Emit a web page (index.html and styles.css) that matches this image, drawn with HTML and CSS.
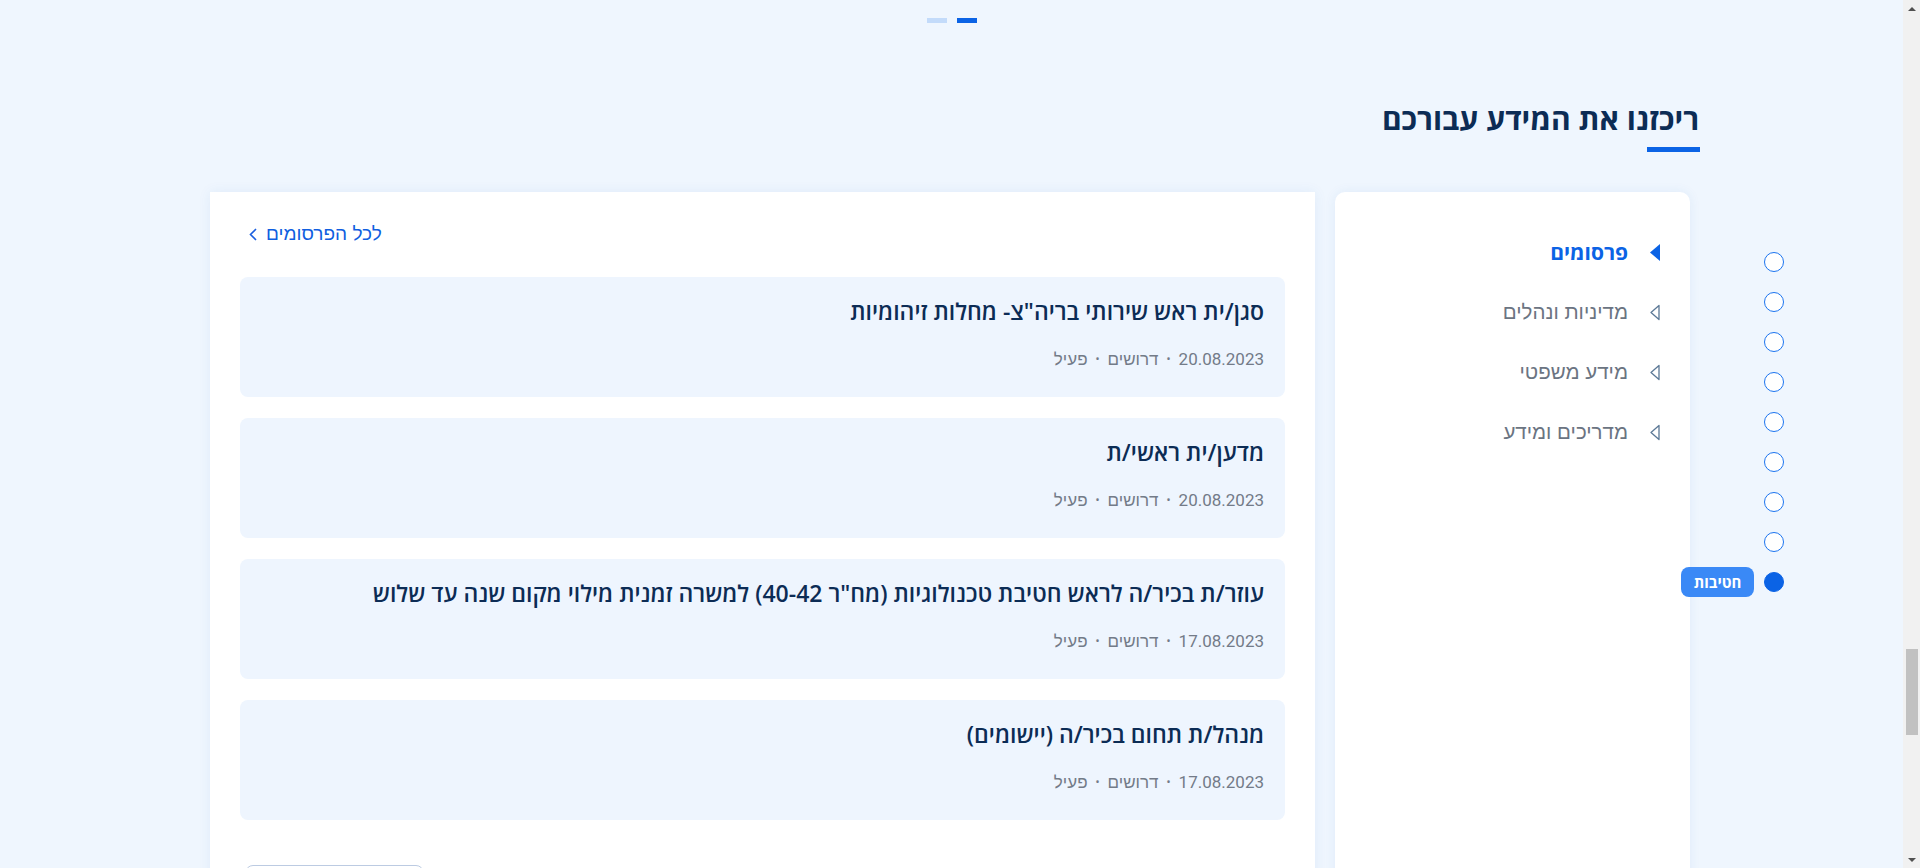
FILE: index.html
```html
<!DOCTYPE html>
<html lang="he" dir="rtl">
<head>
<meta charset="utf-8">
<title>ריכזנו את המידע עבורכם</title>
<link rel="stylesheet" href="styles.css">
</head>
<body>
<div class="page">
  <div class="carousel-dots">
    <span class="dash"></span>
    <span class="dash active"></span>
  </div>

  <section class="section">
    <h2 class="section-title">ריכזנו את המידע עבורכם</h2>
    <div class="title-bar"></div>

    <div class="cards">
      <aside class="nav-card">
        <ul class="nav-list">
          <li class="nav-item active">
            <svg class="tri" width="10" height="17" viewBox="0 0 10 17"><path d="M10 0 L0 8.5 L10 17 Z" fill="#0b63e5"/></svg>
            <span>פרסומים</span>
          </li>
          <li class="nav-item">
            <svg class="tri" width="10" height="17" viewBox="0 0 10 17"><path d="M9 1.5 L1 8.5 L9 15.5 Z" fill="none" stroke="#5b7896" stroke-width="1.3" stroke-linejoin="round"/></svg>
            <span>מדיניות ונהלים</span>
          </li>
          <li class="nav-item">
            <svg class="tri" width="10" height="17" viewBox="0 0 10 17"><path d="M9 1.5 L1 8.5 L9 15.5 Z" fill="none" stroke="#5b7896" stroke-width="1.3" stroke-linejoin="round"/></svg>
            <span>מידע משפטי</span>
          </li>
          <li class="nav-item">
            <svg class="tri" width="10" height="17" viewBox="0 0 10 17"><path d="M9 1.5 L1 8.5 L9 15.5 Z" fill="none" stroke="#5b7896" stroke-width="1.3" stroke-linejoin="round"/></svg>
            <span>מדריכים ומידע</span>
          </li>
        </ul>
      </aside>

      <div class="content-card">
        <a class="all-link" href="#">
          <span>לכל הפרסומים</span>
          <svg width="8" height="13" viewBox="0 0 8 13"><path d="M7 1 L1.5 6.5 L7 12" fill="none" stroke="#1b5fe0" stroke-width="1.6"/></svg>
        </a>

        <div class="items">
          <article class="item">
            <h3 class="item-title">סגן/ית ראש שירותי בריה"צ- מחלות זיהומיות</h3>
            <div class="meta"><span>20.08.2023</span><span class="sep">•</span><span>דרושים</span><span class="sep">•</span><span>פעיל</span></div>
          </article>
          <article class="item">
            <h3 class="item-title">מדען/ית ראשי/ת</h3>
            <div class="meta"><span>20.08.2023</span><span class="sep">•</span><span>דרושים</span><span class="sep">•</span><span>פעיל</span></div>
          </article>
          <article class="item">
            <h3 class="item-title">עוזר/ת בכיר/ה לראש חטיבת טכנולוגיות (מח"ר 40-42) למשרה זמנית מילוי מקום שנה עד שלוש</h3>
            <div class="meta"><span>17.08.2023</span><span class="sep">•</span><span>דרושים</span><span class="sep">•</span><span>פעיל</span></div>
          </article>
          <article class="item">
            <h3 class="item-title">מנהל/ת תחום בכיר/ה (יישומים)</h3>
            <div class="meta"><span>17.08.2023</span><span class="sep">•</span><span>דרושים</span><span class="sep">•</span><span>פעיל</span></div>
          </article>
        </div>

        <div class="more-row">
          <div class="more-btn"></div>
        </div>
      </div>
    </div>
  </section>

  <nav class="side-dots">
    <span class="sdot"></span>
    <span class="sdot"></span>
    <span class="sdot"></span>
    <span class="sdot"></span>
    <span class="sdot"></span>
    <span class="sdot"></span>
    <span class="sdot"></span>
    <span class="sdot"></span>
    <span class="sdot current"><span class="pill">חטיבות</span></span>
  </nav>
</div>

<div class="scrollbar">
  <div class="sb-arrow up"></div>
  <div class="sb-track">
    <div class="sb-space-top"></div>
    <div class="sb-thumb"></div>
  </div>
  <div class="sb-arrow down"></div>
</div>
</body>
</html>
```

FILE: styles.css
```css
* { box-sizing: border-box; }

html, body {
  margin: 0;
  height: 868px;
  overflow: hidden;
}

body {
  display: flex;
  direction: ltr;
  font-family: "Open Sans", "Liberation Sans", "DejaVu Sans", sans-serif;
}

.page {
  flex: 1;
  direction: rtl;
  background: #eff6fe;
  height: 868px;
  overflow: hidden;
  position: relative;
}

.carousel-dots {
  display: flex;
  justify-content: center;
  gap: 10px;
  padding-top: 18px;
  direction: ltr;
}

.dash {
  width: 20px;
  height: 5px;
  background: #c3dbfa;
}

.dash.active { background: #0b63e5; }

.section {
  width: 1480px;
  margin: 0 213px 0 auto;
}

.section-title {
  margin: 77px -9px 0 0;
  font-size: 30px;
  line-height: 38px;
  font-weight: 700;
  color: #0c2c55;
}

.title-bar {
  width: 53px;
  height: 5px;
  background: #0b63e5;
  margin: 9px -10px 0 0;
}

.cards {
  display: flex;
  gap: 20px;
  margin-top: 40px;
  align-items: flex-start;
}

.nav-card {
  width: 355px;
  height: 720px;
  background: #fff;
  border-radius: 10px;
  box-shadow: 0 0 12px rgba(40, 100, 190, 0.08);
  padding: 30px 30px 0 0;
}

.nav-list {
  list-style: none;
  margin: 0;
  padding: 0;
}

.nav-item {
  display: flex;
  align-items: center;
  gap: 22px;
  height: 60px;
  font-size: 20.5px;
  color: #6b7482;
  font-family: "Liberation Sans", "DejaVu Sans", sans-serif;
}

.nav-item.active {
  color: #0b63e5;
  font-weight: 700;
  font-size: 21px;
  font-family: "Open Sans", "Liberation Sans", sans-serif;
}

.tri { flex: none; }

.content-card {
  flex: 1;
  height: 720px;
  background: #fff;
  box-shadow: 0 0 12px rgba(40, 100, 190, 0.08);
  padding: 30px 30px 0 30px;
}

.all-link {
  display: inline-flex;
  align-items: center;
  gap: 9px;
  float: left;
  margin-left: 9px;
  font-size: 19px;
  line-height: 24px;
  color: #0f5ee0;
  text-decoration: none;
  font-family: "Liberation Sans", "DejaVu Sans", sans-serif;
}

.items {
  clear: both;
  padding-top: 31px;
  display: flex;
  flex-direction: column;
  gap: 21px;
}

.item {
  height: 120px;
  background: #eef5fe;
  border-radius: 8px;
  padding: 21px 21px 0 21px;
}

.item-title {
  margin: 0;
  font-size: 23px;
  line-height: 26px;
  font-weight: 600;
  color: #0c2c55;
}

.meta {
  display: flex;
  gap: 8px;
  margin-top: 24px;
  font-size: 17px;
  line-height: 22px;
  color: #737b88;
  font-family: "Roboto", "Liberation Sans", sans-serif;
}

.sep { font-size: 12px; }

.more-row {
  display: flex;
  justify-content: flex-end;
  margin-top: 45px;
  padding-left: 5px;
}

.more-btn {
  width: 179px;
  height: 48px;
  background: #fff;
  border: 1px solid #bccbe2;
  border-radius: 8px;
}

.side-dots {
  position: absolute;
  left: 1764px;
  top: 252px;
  display: flex;
  flex-direction: column;
  gap: 20px;
}

.sdot {
  position: relative;
  width: 20px;
  height: 20px;
  border-radius: 50%;
  border: 1.5px solid #1b74f0;
  background: #fff;
}

.sdot.current {
  background: #0b63e5;
  border-color: #0b63e5;
}

.pill {
  position: absolute;
  right: 29px;
  top: -6px;
  width: 73px;
  height: 30px;
  border-radius: 8px;
  background: #3a89f6;
  color: #fff;
  font-weight: 700;
  font-size: 15px;
  line-height: 30px;
  text-align: center;
  white-space: nowrap;
}

.scrollbar {
  width: 17px;
  height: 868px;
  background: #f1f1f1;
  display: flex;
  flex-direction: column;
}

.sb-arrow {
  height: 17px;
  display: flex;
  justify-content: center;
  align-items: center;
}

.sb-arrow.up::before {
  content: "";
  border-left: 4px solid transparent;
  border-right: 4px solid transparent;
  border-bottom: 4px solid #505050;
}

.sb-arrow.down::before {
  content: "";
  border-left: 4px solid transparent;
  border-right: 4px solid transparent;
  border-top: 4px solid #505050;
}

.sb-track {
  flex: 1;
  display: flex;
  flex-direction: column;
  align-items: center;
}

.sb-space-top { height: 632px; }

.sb-thumb {
  width: 12px;
  height: 86px;
  background: #c1c1c1;
}
```
